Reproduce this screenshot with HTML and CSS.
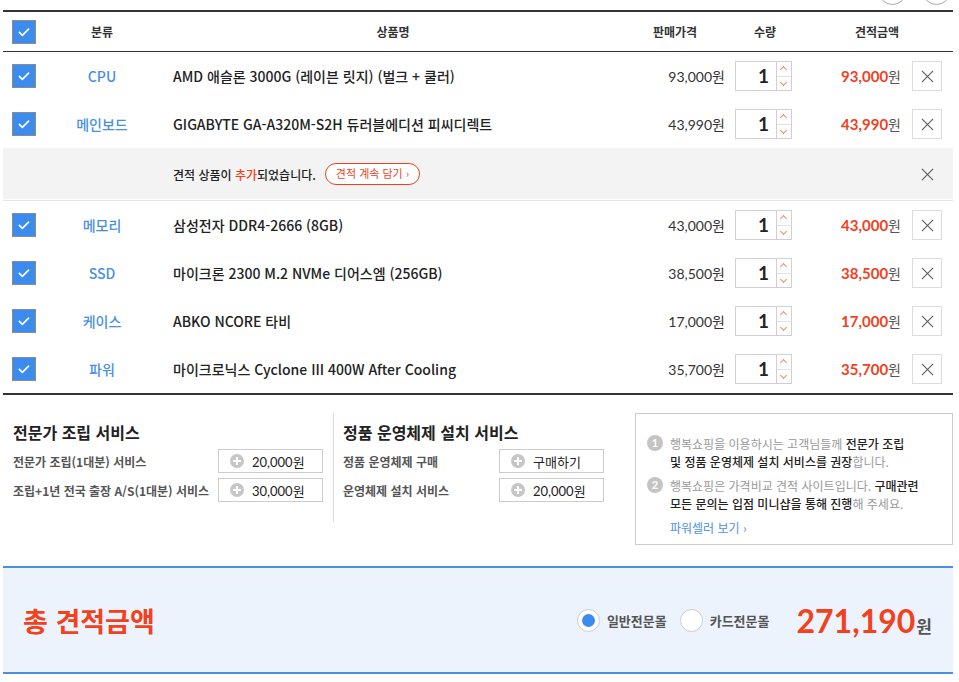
FILE: index.html
```html
<!DOCTYPE html>
<html lang="ko">
<head>
    <meta charset="UTF-8">
    <meta name="viewport" content="width=device-width, initial-scale=1.0">
    <title>견적 목록</title>
    <link rel="stylesheet" href="styles.css">
</head>
<body>
<div class="wrap">
    <span class="top-btn top-btn-1"></span>
    <span class="top-btn top-btn-2"></span>

    <div class="est-table">
        <div class="row head">
            <div class="c-chk"><span class="chk"><svg viewBox="0 0 24 24"><path d="M6.5 12.5l3.5 3.5 7.5-7.5" /></svg></span></div>
            <div class="center">분류</div>
            <div class="center">상품명</div>
            <div class="center">판매가격</div>
            <div class="center">수량</div>
            <div class="center">견적금액</div>
        </div>
        <div id="rows"></div>
    </div>

    <div class="service">
        <div class="svc-col svc-a">
            <h3>전문가 조립 서비스</h3>
            <div class="svc-item">
                <span class="svc-label">전문가 조립(1대분) 서비스</span>
                <button class="svc-btn"><i class="plus"></i>20,000원</button>
            </div>
            <div class="svc-item">
                <span class="svc-label">조립+1년 전국 출장 A/S(1대분) 서비스</span>
                <button class="svc-btn"><i class="plus"></i>30,000원</button>
            </div>
        </div>
        <div class="svc-col svc-b">
            <h3>정품 운영체제 설치 서비스</h3>
            <div class="svc-item">
                <span class="svc-label">정품 운영체제 구매</span>
                <button class="svc-btn"><i class="plus"></i>구매하기</button>
            </div>
            <div class="svc-item">
                <span class="svc-label">운영체제 설치 서비스</span>
                <button class="svc-btn"><i class="plus"></i>20,000원</button>
            </div>
        </div>
        <div class="info-box">
            <p><span class="num">1</span><span class="txt">행복쇼핑을 이용하시는 고객님들께 <b>전문가 조립</b><br><b>및 정품 운영체제 설치 서비스를 권장</b>합니다.</span></p>
            <p><span class="num">2</span><span class="txt">행복쇼핑은 가격비교 견적 사이트입니다. <b>구매관련</b><br><b>모든 문의는 입점 미니샵을 통해 진행</b>해 주세요.</span></p>
            <a href="#" class="seller-link">파워셀러 보기 &rsaquo;</a>
        </div>
    </div>

    <div class="total">
        <div class="total-title">총 견적금액</div>
        <div class="total-right">
            <label class="radio on"><span class="dot"></span>일반전문몰</label>
            <label class="radio"><span class="dot"></span>카드전문몰</label>
            <div class="total-price"><span class="big">271,190</span><span class="won">원</span></div>
        </div>
    </div>
</div>

<script>
    const items = [
        { cat: "CPU", name: "AMD 애슬론 3000G (레이븐 릿지) (벌크 + 쿨러)", price: 93000 },
        { cat: "메인보드", name: "GIGABYTE GA-A320M-S2H 듀러블에디션 피씨디렉트", price: 43990 },
        { notice: true },
        { cat: "메모리", name: "삼성전자 DDR4-2666 (8GB)", price: 43000 },
        { cat: "SSD", name: "마이크론 2300 M.2 NVMe 디어스엠 (256GB)", price: 38500 },
        { cat: "케이스", name: "ABKO NCORE 타비", price: 17000 },
        { cat: "파워", name: "마이크로닉스 Cyclone III 400W After Cooling", price: 35700 }
    ];

    const check = '<span class="chk"><svg viewBox="0 0 24 24"><path d="M6.5 12.5l3.5 3.5 7.5-7.5" /></svg></span>';
    const xIcon = '<svg viewBox="0 0 14 14"><path d="M1 1l12 12M13 1L1 13" /></svg>';

    function won(n) {
        return n.toLocaleString('en-US');
    }

    function renderRows() {
        const box = document.getElementById('rows');
        box.innerHTML = items.map(item => {
            if (item.notice) {
                return `
                <div class="row notice">
                    <div class="notice-msg">
                        <span>견적 상품이 <em>추가</em>되었습니다.</span>
                        <a href="#" class="more-btn">견적 계속 담기 &rsaquo;</a>
                    </div>
                    <span class="notice-close">${xIcon}</span>
                </div>`;
            }
            return `
            <div class="row item">
                <div class="c-chk">${check}</div>
                <div class="cat">${item.cat}</div>
                <div class="c-name">${item.name}</div>
                <div class="c-price">${won(item.price)}<span class="w">원</span></div>
                <div class="c-qty">
                    <div class="qty">
                        <span class="qty-val">1</span>
                        <span class="spin"><i class="up"></i><i class="down"></i></span>
                    </div>
                </div>
                <div class="c-sum">
                    <span class="sum">${won(item.price)}<span class="w">원</span></span>
                    <button class="del">${xIcon}</button>
                </div>
            </div>`;
        }).join('');
    }

    renderRows();
</script>
</body>
</html>
```

FILE: styles.css
```css
body {
    margin: 0;
    font-family: "Noto Sans CJK KR", sans-serif;
    color: #222;
    background: #fff;
}
.wrap {
    position: relative;
    width: 950px;
    margin-left: 3px;
    padding-top: 10px;
}
.top-btn {
    position: absolute;
    top: -24px;
    width: 27px;
    height: 27px;
    border: 1px solid #aaa;
    border-radius: 50%;
}
.top-btn-1 { left: 875px; }
.top-btn-2 { left: 919px; }

/* table */
.est-table {
    border-top: 2px solid #333;
    border-bottom: 2px solid #333;
}
.row {
    display: grid;
    grid-template-columns: 40px 118px 464px 100px 80px 1fr;
    align-items: center;
    height: 48px;
}
.row.head {
    grid-template-columns: 40px 118px 464px 100px 80px 144px;
    height: 39px;
    border-bottom: 1px solid #333;
    font-size: 12px;
    font-weight: 700;
    color: #333;
}
.center {
    text-align: center;
}
.c-chk {
    padding-left: 9px;
    display: flex;
}
.chk {
    width: 22px;
    height: 22px;
    background: #3c8cf0;
    border: 1px solid #8c8c8c;
    display: flex;
    align-items: center;
    justify-content: center;
}
.chk svg {
    width: 20px;
    height: 20px;
    fill: none;
    stroke: #fff;
    stroke-width: 2;
    stroke-linecap: round;
    stroke-linejoin: round;
}
.cat {
    text-align: center;
    color: #4a90e2;
    font-size: 14px;
    font-weight: 500;
}
.item .c-name {
    padding-left: 12px;
    font-size: 14px;
    font-weight: 500;
    color: #222;
}
.item .c-price {
    text-align: right;
    font-family: Lato, "Noto Sans CJK KR", sans-serif;
    font-size: 14px;
    color: #333;
}
.w {
    font-family: "Noto Sans CJK KR", sans-serif;
    font-size: 14px;
}
.c-qty {
    padding-left: 10px;
}
.qty {
    width: 55px;
    height: 28px;
    border: 1px solid #d0d0d0;
    display: flex;
}
.qty-val {
    flex: 1;
    text-align: right;
    padding-right: 7px;
    font-family: Lato, sans-serif;
    font-weight: 700;
    font-size: 19px;
    line-height: 28px;
    color: #222;
}
.spin {
    width: 14px;
    border-left: 1px solid #d0d0d0;
    display: flex;
    flex-direction: column;
}
.spin i {
    flex: 1;
    position: relative;
}
.spin .up {
    border-bottom: 1px solid #e2e2e2;
}
.spin i::after {
    content: "";
    position: absolute;
    left: 4px;
    width: 4px;
    height: 4px;
    border-left: 1px solid #f08a5d;
    border-top: 1px solid #f08a5d;
}
.spin .up::after {
    top: 5px;
    transform: rotate(45deg);
}
.spin .down::after {
    top: 3px;
    transform: rotate(-135deg);
}
.c-sum {
    display: flex;
    justify-content: flex-end;
    align-items: center;
    padding-right: 11px;
}
.sum {
    font-family: Lato, "Noto Sans CJK KR", sans-serif;
    font-weight: 700;
    font-size: 15px;
    color: #f2411d;
    margin-right: 11px;
}
.sum .w {
    font-weight: 400;
    color: #555;
}
.del {
    width: 30px;
    height: 30px;
    background: #fff;
    border: 1px solid #ddd;
    padding: 0;
    display: flex;
    align-items: center;
    justify-content: center;
    cursor: pointer;
}
.del svg, .notice-close svg {
    width: 13px;
    height: 13px;
    fill: none;
    stroke: #555;
    stroke-width: 1.1;
}

/* notice row */
.row.notice {
    display: flex;
    justify-content: space-between;
    height: 52px;
    background: #f3f3f3;
    border-bottom: 1px solid #e6e6e6;
    box-shadow: inset 0 -1px 0 #fff;
}
.notice-msg {
    padding-left: 170px;
    font-size: 12px;
    font-weight: 500;
    color: #222;
    display: flex;
    align-items: center;
}
.notice-msg em {
    font-style: normal;
    color: #f2411d;
}
.more-btn {
    margin-left: 9px;
    height: 20px;
    line-height: 19px;
    padding: 0 10px;
    border: 1px solid #f2411d;
    border-radius: 11px;
    background: #fff;
    color: #f2411d;
    font-size: 11px;
    font-weight: 400;
    text-decoration: none;
}
.notice-close {
    width: 30px;
    margin-right: 11px;
    display: flex;
    justify-content: center;
}

/* services */
.service {
    display: flex;
    padding-top: 18px;
    height: 153px;
}
.svc-col {
    height: 109px;
}
.svc-a {
    width: 320px;
    padding-left: 10px;
}
.svc-b {
    width: 282px;
    border-left: 1px solid #ddd;
    padding-left: 9px;
}
.svc-col h3 {
    margin: 9px 0 7px;
    font-size: 16px;
    line-height: 20px;
    font-weight: 700;
    color: #222;
}
.svc-item {
    display: flex;
    align-items: center;
    margin-bottom: 5px;
}
.svc-label {
    font-size: 12px;
    font-weight: 700;
    color: #555;
}
.svc-a .svc-label { width: 205px; }
.svc-b .svc-label { width: 156px; }
.svc-btn {
    width: 105px;
    height: 24px;
    background: #fff;
    border: 1px solid #ccc;
    padding: 0 0 0 11px;
    display: flex;
    align-items: center;
    font-family: Lato, "Noto Sans CJK KR", sans-serif;
    font-size: 13px;
    color: #222;
}
.plus {
    width: 14px;
    height: 14px;
    border-radius: 50%;
    background: #c6c6c6;
    margin-right: 8px;
    position: relative;
}
.plus::before, .plus::after {
    content: "";
    position: absolute;
    background: #fff;
}
.plus::before {
    left: 3px;
    top: 6px;
    width: 8px;
    height: 2px;
}
.plus::after {
    left: 6px;
    top: 3px;
    width: 2px;
    height: 8px;
}
.info-box {
    margin-left: auto;
    width: 305px;
    height: 109px;
    border: 1px solid #ccc;
    padding: 21px 0 0 11px;
    font-size: 12px;
    color: #999;
}
.info-box p {
    margin: 0 0 6px;
    display: flex;
    line-height: 18px;
}
.info-box b {
    font-weight: 500;
    color: #222;
}
.num {
    width: 16px;
    height: 16px;
    border-radius: 50%;
    background: #c4c4c4;
    color: #fff;
    font-family: Lato, sans-serif;
    font-weight: 700;
    font-size: 11px;
    line-height: 16px;
    text-align: center;
    margin: 0 7px 0 0;
    flex-shrink: 0;
}
.seller-link {
    display: block;
    margin-left: 23px;
    line-height: 18px;
    color: #4a90e2;
    text-decoration: none;
}

/* total */
.total {
    display: flex;
    align-items: center;
    justify-content: space-between;
    height: 104px;
    background: #ecf3fd;
    border-top: 2px solid #4a90e2;
    border-bottom: 2px solid #4a90e2;
    padding: 0 21px 0 20px;
}
.total-title {
    font-size: 27px;
    font-weight: 700;
    color: #f2411d;
}
.total-right {
    display: flex;
    align-items: center;
}
.radio {
    display: flex;
    align-items: center;
    font-size: 13px;
    font-weight: 700;
    color: #555;
    margin-right: 13px;
}
.radio .dot {
    width: 21px;
    height: 21px;
    border: 1px solid #ccc;
    border-radius: 50%;
    background: #fff;
    margin-right: 7px;
    position: relative;
}
.radio.on .dot::after {
    content: "";
    position: absolute;
    left: 4px;
    top: 4px;
    width: 13px;
    height: 13px;
    border-radius: 50%;
    background: #3c8cf0;
}
.total-price {
    margin-left: 14px;
    display: flex;
    align-items: baseline;
}
.big {
    font-family: Lato, sans-serif;
    font-weight: 700;
    font-size: 32px;
    color: #f2411d;
}
.total-price .won {
    font-size: 17px;
    font-weight: 700;
    color: #555;
    margin-left: 1px;
}
```
